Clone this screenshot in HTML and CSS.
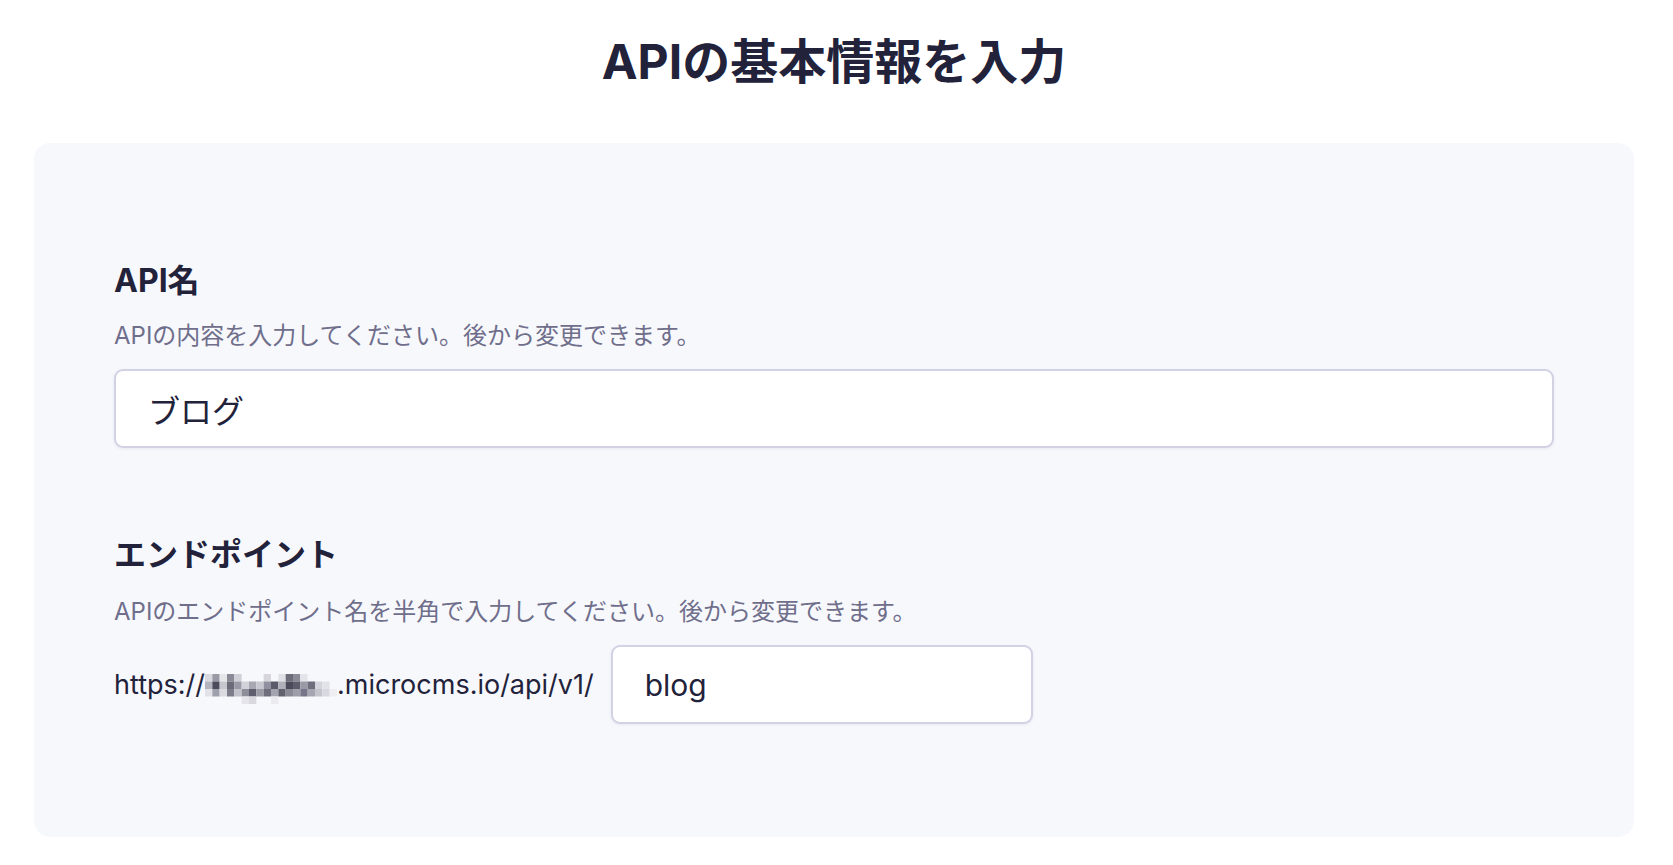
FILE: index.html
```html
<!DOCTYPE html>
<html lang="ja">
<head>
<meta charset="utf-8">
<title>APIの基本情報を入力</title>
<link rel="stylesheet" href="styles.css">
</head>
<body>
<main class="page">
  <h1 class="title">APIの基本情報を入力</h1>
  <section class="card">
    <div class="field">
      <h2 class="label">API名</h2>
      <p class="desc">APIの内容を入力してください。後から変更できます。</p>
      <div class="input input-wide">ブログ</div>
    </div>
    <div class="field field-second">
      <h2 class="label">エンドポイント</h2>
      <p class="desc desc-second">APIのエンドポイント名を半角で入力してください。後から変更できます。</p>
      <div class="endpoint-row">
        <span class="url">https://<svg class="mosaic" width="132" height="30" viewBox="0 0 18 4" preserveAspectRatio="none" aria-hidden="true">
          <rect x="0" y="0" width="1" height="1" fill="#d9d9df"/>
          <rect x="1" y="0" width="1" height="1" fill="#9a9aa6"/>
          <rect x="2" y="0" width="1" height="1" fill="#e6e6ea"/>
          <rect x="3" y="0" width="1" height="1" fill="#8a8a96"/>
          <rect x="4" y="0" width="1" height="1" fill="#d0d0d8"/>
          <rect x="8" y="0" width="1" height="1" fill="#d6d6dc"/>
          <rect x="10" y="0" width="1" height="1" fill="#e0e0e6"/>
          <rect x="11" y="0" width="1" height="1" fill="#6c6c7a"/>
          <rect x="12" y="0" width="1" height="1" fill="#8c8c98"/>
          <rect x="13" y="0" width="1" height="1" fill="#e4e4ea"/>
          <rect x="0" y="1" width="1" height="1" fill="#b4b4be"/>
          <rect x="1" y="1" width="1" height="1" fill="#4c4c5c"/>
          <rect x="2" y="1" width="1" height="1" fill="#c6c6ce"/>
          <rect x="3" y="1" width="1" height="1" fill="#6a6a78"/>
          <rect x="4" y="1" width="1" height="1" fill="#9a9aa6"/>
          <rect x="5" y="1" width="1" height="1" fill="#d2d2da"/>
          <rect x="6" y="1" width="1" height="1" fill="#a8a8b2"/>
          <rect x="7" y="1" width="1" height="1" fill="#c8c8d0"/>
          <rect x="8" y="1" width="1" height="1" fill="#9090a0"/>
          <rect x="9" y="1" width="1" height="1" fill="#5a5a6a"/>
          <rect x="10" y="1" width="1" height="1" fill="#b0b0ba"/>
          <rect x="11" y="1" width="1" height="1" fill="#4a4a5a"/>
          <rect x="12" y="1" width="1" height="1" fill="#5c5c6c"/>
          <rect x="13" y="1" width="1" height="1" fill="#9a9aa6"/>
          <rect x="14" y="1" width="1" height="1" fill="#6e6e7c"/>
          <rect x="15" y="1" width="1" height="1" fill="#d4d4dc"/>
          <rect x="16" y="1" width="1" height="1" fill="#e2e2e8"/>
          <rect x="0" y="2" width="1" height="1" fill="#e2e2e8"/>
          <rect x="1" y="2" width="1" height="1" fill="#a0a0ac"/>
          <rect x="2" y="2" width="1" height="1" fill="#dadae0"/>
          <rect x="3" y="2" width="1" height="1" fill="#7c7c8a"/>
          <rect x="4" y="2" width="1" height="1" fill="#c2c2ca"/>
          <rect x="5" y="2" width="1" height="1" fill="#8e8e9a"/>
          <rect x="6" y="2" width="1" height="1" fill="#5e5e6e"/>
          <rect x="7" y="2" width="1" height="1" fill="#9c9ca8"/>
          <rect x="8" y="2" width="1" height="1" fill="#6e6e7c"/>
          <rect x="9" y="2" width="1" height="1" fill="#a4a4b0"/>
          <rect x="10" y="2" width="1" height="1" fill="#62626f"/>
          <rect x="11" y="2" width="1" height="1" fill="#8a8a96"/>
          <rect x="12" y="2" width="1" height="1" fill="#9e9eaa"/>
          <rect x="13" y="2" width="1" height="1" fill="#76768a"/>
          <rect x="14" y="2" width="1" height="1" fill="#a6a6b2"/>
          <rect x="15" y="2" width="1" height="1" fill="#c4c4cc"/>
          <rect x="16" y="2" width="1" height="1" fill="#d8d8e0"/>
          <rect x="17" y="2" width="1" height="1" fill="#eeeef2"/>
          <rect x="5" y="3" width="1" height="1" fill="#e4e4ea"/>
          <rect x="6" y="3" width="1" height="1" fill="#d8d8de"/>
          <rect x="9" y="3" width="1" height="1" fill="#eaeaef"/>
        </svg>.microcms.io/api/v1/</span>
        <div class="input input-short">blog</div>
      </div>
    </div>
  </section>
</main>
</body>
</html>
```

FILE: styles.css
```css
* {
  box-sizing: border-box;
}

html, body {
  margin: 0;
  padding: 0;
  background: #ffffff;
}

body {
  font-family: Inter, "Noto Sans CJK JP", sans-serif;
  color: #22223a;
}

.page {
  padding: 30px 39px 30px 34px;
}

.title {
  margin: 0;
  text-align: center;
  font-size: 48px;
  line-height: 63px;
  font-weight: 700;
  color: #22223a;
}

.card {
  margin-top: 50px;
  background: #f7f8fc;
  border-radius: 16px;
  padding: 117px 80px 113px 80px;
}

.field-second {
  margin-top: 86px;
}

.label {
  margin: 0;
  font-size: 32px;
  line-height: 42px;
  font-weight: 700;
  color: #22223a;
}

.desc {
  margin: 17px 0 17px 0;
  font-size: 24px;
  line-height: 33px;
  color: #6f6e8b;
}

.desc-second {
  margin-top: 19px;
}

.input {
  background: #ffffff;
  border: 2px solid #d3d1e4;
  border-radius: 9px;
  box-shadow: 0 1px 3px rgba(60, 60, 100, 0.08);
  height: 79px;
  display: flex;
  align-items: center;
  padding-left: 32px;
  font-size: 30px;
  color: #22223a;
}

.input-wide {
  width: 100%;
  font-size: 32px;
}

.endpoint-row {
  display: flex;
  align-items: center;
  gap: 17px;
}

.url {
  font-size: 27px;
  color: #22223a;
  display: inline-flex;
  align-items: center;
  white-space: nowrap;
}

.mosaic {
  display: inline-block;
  transform: translateY(4px);
}

.input-short {
  width: 422px;
}
```
